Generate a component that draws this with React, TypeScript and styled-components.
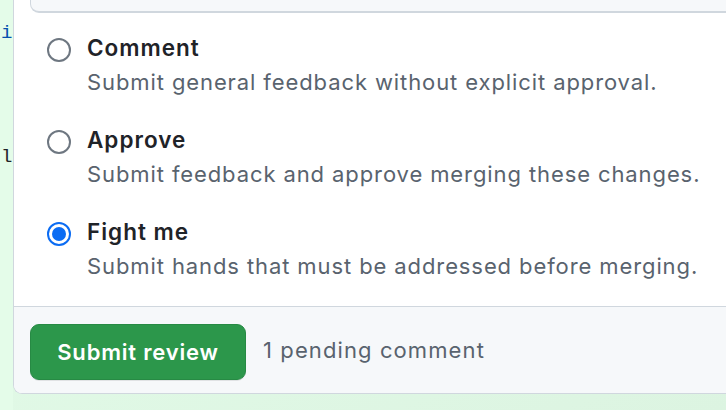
import React, { useState } from 'react';
import styled, { createGlobalStyle } from 'styled-components';

const GlobalStyle = createGlobalStyle`
  html, body {
    margin: 0;
    padding: 0;
  }
  body {
    background: linear-gradient(160deg, #e6ffec 0%, #dcf4e1 100%);
    font-family: Inter, 'Liberation Sans', Arial, sans-serif;
    -webkit-font-smoothing: antialiased;
  }
`;

interface IOption {
  id: string;
  title: string;
  description: string;
}

interface IChecked {
  checked: boolean;
}

interface ICodeLine {
  tone?: 'keyword' | 'plain';
}

const options: IOption[] = [
  {
    id: 'comment',
    title: 'Comment',
    description: 'Submit general feedback without explicit approval.',
  },
  {
    id: 'approve',
    title: 'Approve',
    description: 'Submit feedback and approve merging these changes.',
  },
  {
    id: 'fight',
    title: 'Fight me',
    description: 'Submit hands that must be addressed before merging.',
  },
];

const Page = styled.div`
  display: flex;
  width: 726px;
  height: 410px;
  overflow: hidden;
`;

const Gutter = styled.div`
  width: 13px;
  flex-shrink: 0;
  padding-top: 18px;
  background: #e4fce9;
  display: flex;
  flex-direction: column;
`;

const CodeLine = styled.div<ICodeLine>`
  height: 31px;
  line-height: 31px;
  padding-left: 1px;
  font-family: 'Liberation Mono', 'DejaVu Sans Mono', monospace;
  font-size: 19px;
  white-space: pre;
  color: ${(p) => (p.tone === 'keyword' ? '#0550ae' : '#1f2328')};
`;

const Panel = styled.div`
  flex: 1;
  align-self: flex-start;
  height: 394px;
  box-sizing: border-box;
  background: #ffffff;
  border-left: 1px solid #d0d7de;
  border-bottom: 1px solid #d0d7de;
  border-bottom-left-radius: 9px;
  display: flex;
  flex-direction: column;
  overflow: hidden;
`;

const Top = styled.div`
  padding: 0 0 0 16px;
`;

const TextareaStub = styled.div`
  height: 13px;
  box-sizing: border-box;
  background: #f6f8fa;
  border: 1px solid #d0d7de;
  border-top: none;
  border-right: none;
  border-bottom-left-radius: 9px;
  border-bottom-width: 2px;
`;

const OptionList = styled.div`
  display: flex;
  flex-direction: column;
  gap: 29px;
  padding: 23px 0 23px 33px;
`;

const OptionRow = styled.label`
  display: flex;
  align-items: flex-start;
  gap: 16px;
  cursor: pointer;
`;

const Radio = styled.span<IChecked>`
  width: 24px;
  height: 24px;
  margin-top: 2px;
  flex-shrink: 0;
  box-sizing: border-box;
  border-radius: 50%;
  background: #ffffff;
  border: ${(p) => (p.checked ? '2px solid #0b6cf3' : '2px solid #6e7781')};
  display: flex;
  align-items: center;
  justify-content: center;
  &:after {
    content: '';
    width: 14px;
    height: 14px;
    border-radius: 50%;
    background: #0b6cf3;
    display: ${(p) => (p.checked ? 'block' : 'none')};
  }
`;

const OptionText = styled.div`
  display: flex;
  flex-direction: column;
`;

const OptionTitle = styled.span`
  margin: -3px 0 3px;
  font-size: 22.5px;
  line-height: 29px;
  font-weight: 600;
  color: #1f2328;
  letter-spacing: 1px;
`;

const OptionDescription = styled.span`
  font-size: 22px;
  line-height: 34px;
  color: #59636e;
  white-space: nowrap;
  letter-spacing: 0.9px;
`;

const Footer = styled.div`
  flex: 1;
  display: flex;
  align-items: flex-start;
  gap: 17px;
  padding: 17px 0 0 16px;
  background: #f6f8fa;
  border-top: 1px solid #d0d7de;
`;

const SubmitButton = styled.button`
  width: 216px;
  height: 56px;
  padding: 0;
  box-sizing: border-box;
  background: #2c974b;
  border: 1px solid #278a44;
  border-radius: 9px;
  color: #ffffff;
  font-family: inherit;
  font-size: 22px;
  font-weight: 600;
  letter-spacing: 0.8px;
  cursor: pointer;
  box-shadow: 0 1px 0 rgba(31, 35, 40, 0.1);
`;

const Pending = styled.span`
  line-height: 52px;
  font-size: 22px;
  letter-spacing: 1.1px;
  color: #59636e;
`;

const App: React.FC = () => {
  const [selected, setSelected] = useState('fight');
  return (
    <Page>
      <GlobalStyle />
      <Gutter>
        <CodeLine tone='keyword'>i</CodeLine>
        <CodeLine> </CodeLine>
        <CodeLine> </CodeLine>
        <CodeLine> </CodeLine>
        <CodeLine>l</CodeLine>
      </Gutter>
      <Panel>
        <Top>
          <TextareaStub />
        </Top>
        <OptionList>
          {options.map((o) => (
            <OptionRow key={o.id} onClick={() => setSelected(o.id)}>
              <Radio checked={selected === o.id} />
              <OptionText>
                <OptionTitle>{o.title}</OptionTitle>
                <OptionDescription>{o.description}</OptionDescription>
              </OptionText>
            </OptionRow>
          ))}
        </OptionList>
        <Footer>
          <SubmitButton>Submit review</SubmitButton>
          <Pending>1 pending comment</Pending>
        </Footer>
      </Panel>
    </Page>
  );
};

export default App;
